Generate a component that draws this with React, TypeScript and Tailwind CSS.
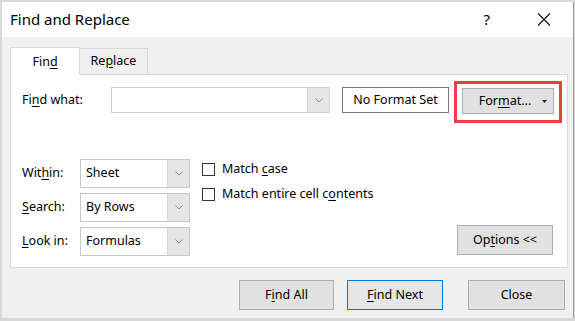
import { ReactNode } from 'react'

const U = ({ children }: { children: ReactNode }) => <span className="underline underline-offset-2">{children}</span>

const Chevron = () => (
  <svg width="8" height="5" viewBox="0 0 8 5" className="text-[#8a8a8a]">
    <polyline points="0.5,0.5 4,4 7.5,0.5" fill="none" stroke="currentColor" strokeWidth="1" />
  </svg>
)

const Select = ({ value, w }: { value: string; w: string }) => (
  <div className={`flex h-[29px] border border-[#c8c8c8] bg-white ${w}`}>
    <div className="flex flex-1 items-center pl-[5px] text-[12.5px]">{value}</div>
    <div className="flex w-[22px] items-center justify-center border-l border-[#d6d6d6] bg-[#e6e6e6]">
      <Chevron />
    </div>
  </div>
)

const Btn = ({ children, w, h = 'h-[30px]', blue = false }: { children: ReactNode; w: string; h?: string; blue?: boolean }) => (
  <div
    className={`flex items-center justify-center border text-[12.5px] ${w} ${h} ${
      blue ? 'border-[#0078d7] bg-[#e5e5e5]' : 'border-[#adadad] bg-[#e1e1e1]'
    }`}
  >
    {children}
  </div>
)

const Check = ({ children }: { children: ReactNode }) => (
  <div className="flex h-[17px] items-center gap-[7px]">
    <div className="h-[13px] w-[13px] border border-[#333] bg-white" />
    <span className="text-[12.5px]">{children}</span>
  </div>
)

export default function App() {
  return (
    <div
      className="h-[321px] w-[575px] overflow-hidden bg-[#d8d8d8] text-black"
      style={{ fontFamily: '"Noto Sans", "Open Sans", sans-serif' }}
    >
      <div className="ml-[2px] mt-[2px] flex h-[316px] w-[572px] flex-col border-r border-[#9a9a9a]">
        {/* title bar */}
        <div className="flex h-[35px] items-center bg-white pl-[8px]">
          <span className="text-[15px]">Find and Replace</span>
          <span className="ml-auto mr-[47px] text-[15px]">?</span>
          <svg width="14" height="13" viewBox="0 0 14 13" className="mr-[22px]">
            <path d="M1 0.5 L13 12.5 M13 0.5 L1 12.5" stroke="#111" strokeWidth="1.1" fill="none" />
          </svg>
        </div>

        {/* body */}
        <div className="flex flex-1 flex-col bg-[#f0f0f0] px-[8px] pt-[10px]">
          {/* tabs */}
          <div className="relative z-10 flex h-[27px] items-end">
            <div className="flex h-[28px] w-[70px] items-center justify-center border-x border-t border-[#d9d9d9] bg-white pt-[1px] text-[12.5px] -mb-[1px]">
              Fin<U>d</U>
            </div>
            <div className="flex h-[26px] w-[68px] items-center justify-center border-r border-t border-[#d9d9d9] bg-[#f0f0f0] text-[12.5px]">
              Re<U>p</U>lace
            </div>
          </div>

          {/* panel */}
          <div className="flex h-[194px] w-[558px] flex-col border border-[#d9d9d9] bg-white">
            <div className="flex items-start pl-[11px] pt-[6px]">
              <div className="mt-[6px] flex h-[26px] w-[89px] items-center text-[12.5px]">
                Fi<U>n</U>d what:
              </div>
              <div className="mt-[6px] flex h-[26px] w-[219px] border border-[#cfcfcf] bg-white">
                <div className="flex-1" />
                <div className="flex w-[22px] items-center justify-center border-l border-[#d6d6d6] bg-[#e6e6e6]">
                  <Chevron />
                </div>
              </div>
              <div className="ml-[12px] mt-[6px] flex h-[26px] w-[107px] items-center justify-center border border-[#7a7a7a] bg-white text-[12.5px]">
                No Format Set
              </div>
              <div className="ml-[5px] border-[3px] border-[#eb4040] pb-[6px] pl-[5px] pr-[5px] pt-[4px]">
                <div className="relative flex h-[26px] w-[92px] items-center justify-center border border-[#adadad] bg-[#e1e1e1] text-[12.5px]">
                  <span className="-ml-[6px]">
                    For<U>m</U>at...
                  </span>
                  <svg width="5" height="3" viewBox="0 0 5 3" className="absolute right-[6px] top-[11px]">
                    <polygon points="0,0 5,0 2.5,3" fill="#222" />
                  </svg>
                </div>
              </div>
            </div>

            <div className="mt-[36px] flex pl-[11px]">
              <div className="flex flex-col gap-[5px]">
                {[
                  [<>Wit<U>h</U>in:</>, 'Sheet'],
                  [<><U>S</U>earch:</>, 'By Rows'],
                  [<><U>L</U>ook in:</>, 'Formulas'],
                ].map(([label, v], i) => (
                  <div key={i} className="flex items-center">
                    <div className="w-[58px] text-[12.5px]">{label}</div>
                    <Select value={v as string} w="w-[110px]" />
                  </div>
                ))}
              </div>
              <div className="ml-[12px] mt-[2px] flex flex-col gap-[8px]">
                <Check>
                  Match <U>c</U>ase
                </Check>
                <Check>
                  Match entire cell c<U>o</U>ntents
                </Check>
              </div>
              <div className="ml-auto mr-[14px] mt-[66px]">
                <Btn w="w-[96px]">
                  Op<U>t</U>ions &lt;&lt;
                </Btn>
              </div>
            </div>
          </div>

          {/* bottom buttons */}
          <div className="mt-[12px] flex pl-[229px]">
            <Btn w="w-[96px]">
              F<U>i</U>nd All
            </Btn>
            <div className="ml-[13px]">
              <Btn w="w-[96px]" blue>
                <U>F</U>ind Next
              </Btn>
            </div>
            <div className="ml-[25px]">
              <Btn w="w-[97px]">Close</Btn>
            </div>
          </div>
        </div>
      </div>
    </div>
  )
}
